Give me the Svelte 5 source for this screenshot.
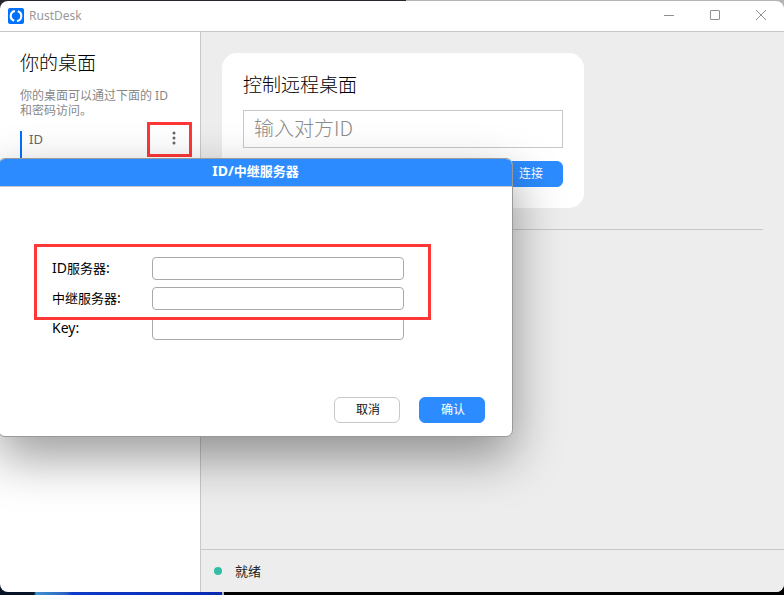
<script>
  const fields = [
    { id: 'id-server', latin: 'ID', label: '服务器', colon: ':' },
    { id: 'relay-server', latin: '', label: '中继服务器', colon: ':' },
    { id: 'key', latin: 'Key', label: '', colon: ':' }
  ];
  let values = $state({ 'id-server': '', 'relay-server': '', key: '' });
  let peer = $state('');
</script>

<div class="desktop">
  <div class="window">
    <header class="titlebar">
      <svg class="logo" viewBox="0 0 16 16" aria-hidden="true">
        <rect width="16" height="16" rx="2" fill="#0071ff" />
        <g fill="none" stroke="#fff" stroke-width="2.1">
          <path d="M7 3A5 5 0 0 0 6.2 12.7" />
          <path d="M9 13A5 5 0 0 0 9.8 3.3" />
        </g>
      </svg>
      <span class="app-name">RustDesk</span>
      <div class="controls">
        <button aria-label="最小化"><svg viewBox="0 0 12 12"><path d="M1 5.5h10" /></svg></button>
        <button aria-label="最大化"><svg viewBox="0 0 12 12"><rect x="1.5" y="0.5" width="9" height="9" rx="0.5" /></svg></button>
        <button aria-label="关闭"><svg viewBox="0 0 12 12"><path d="M1 0l10 10M11 0L1 10" /></svg></button>
      </div>
    </header>

    <div class="body">
      <aside>
        <h1>你的桌面</h1>
        <p>你的桌面可以通过下面的 ID 和密码访问。</p>
        <div class="id-row">
          <span>ID</span>
          <button class="more" aria-label="菜单">
            <svg viewBox="0 0 4 14"><circle cx="2" cy="2" r="1.5" /><circle cx="2" cy="7" r="1.5" /><circle cx="2" cy="12" r="1.5" /></svg>
          </button>
        </div>
      </aside>

      <main>
        <div class="content">
          <section class="card">
            <h2>控制远程桌面</h2>
            <input class="peer" aria-label="输入对方ID" placeholder="输入对方ID" bind:value={peer} />
            <div class="card-actions"><button class="btn primary">连接</button></div>
          </section>
          <hr />
        </div>
        <footer><i></i><span>就绪</span></footer>
      </main>
    </div>
  </div>

  <form class="dialog" aria-labelledby="dialog-title" onsubmit={(e) => e.preventDefault()}>
    <h3 id="dialog-title"><span class="latin">ID/</span>中继服务器</h3>
    <div class="fields">
      {#each fields as field}
        <div class="field">
          <label for={field.id}><span class="latin">{field.latin}</span>{field.label}<span class="latin">{field.colon}</span></label>
          <input id={field.id} bind:value={values[field.id]} />
        </div>
      {/each}
      <div class="mark servers"></div>
    </div>
    <div class="actions">
      <button type="button" class="btn">取消</button>
      <button class="btn primary">确认</button>
    </div>
  </form>
</div>

<style>
  .desktop, .desktop * { box-sizing: border-box; }
  .desktop {
    position: relative;
    height: 100vh;
    padding: 1px 0 3px;
    display: flex;
    overflow: hidden;
    background:
      linear-gradient(90deg, #26262e 406px, #b4b4b4 406px) top / 100% 12px no-repeat,
      linear-gradient(90deg, #071427 34px, #3f93cf 36px, #2d62c4 66px, #0f3bc8 72px, #0829b0 222px, #b5b5b5 222px, #b5b5b5 224px, #000 224px) bottom / 100% 12px no-repeat;
    font-family: "Noto Sans", "Noto Sans CJK SC", sans-serif;
    font-size: 13px;
    color: #222;
  }
  button, input { font-family: inherit; margin: 0; }
  button { padding: 0; border: 0; background: none; }
  h1, h2, h3, p { margin: 0; }
  .latin { font-size: 14px; line-height: 1; }
  .window {
    flex: 1;
    display: flex;
    flex-direction: column;
    border-radius: 8px;
    overflow: hidden;
    background: #fff;
  }
  .titlebar {
    flex: none;
    height: 31px;
    display: flex;
    align-items: center;
    padding-left: 8px;
    border-bottom: 1px solid #c8c8c8;
  }
  .logo { width: 16px; height: 16px; margin-right: 5px; }
  .app-name { font-size: 12px; line-height: 16px; color: #999; }
  .controls { margin-left: auto; display: flex; }
  .controls button { width: 46px; height: 30px; display: flex; align-items: center; justify-content: center; }
  .controls svg { width: 12px; height: 12px; fill: none; stroke: #909090; }
  .body { flex: 1; display: flex; min-height: 0; }
  aside {
    flex: none;
    width: 201px;
    padding: 17px 20px;
    border-right: 1px solid #c8c8c8;
  }
  h1, h2 { font-size: 19px; line-height: 28px; font-weight: 300; color: #000; }
  aside p { margin-top: 11px; padding-right: 4px; font-size: 12px; line-height: 15px; color: #888; }
  .id-row {
    margin-top: 13px;
    height: 46px;
    padding-left: 7px;
    border-left: 2px solid #0071ff;
    display: flex;
    justify-content: space-between;
    line-height: 16px;
    color: #666;
  }
  .more {
    width: 45px;
    height: 35px;
    margin: -9px -12px 0 0;
    padding-left: 8px;
    border: 3px solid #ff3737;
  }
  .more svg { display: block; width: 4px; height: 14px; margin: -3px auto 0; fill: #666; }
  main { flex: 1; min-width: 0; display: flex; flex-direction: column; background: #ededed; }
  .content { flex: 1; padding: 21px; }
  .card { max-width: 362px; padding: 18px 21px 21px; border-radius: 15px; background: #fff; }
  .peer {
    display: block;
    width: 100%;
    height: 38px;
    margin-top: 11px;
    padding: 0 10px 3px;
    border: 1px solid #c8c8c8;
    font-family: "Noto Sans CJK SC", sans-serif;
    font-size: 20px;
    font-weight: 300;
  }
  .peer::placeholder { color: #8c8c8c; opacity: 1; }
  .card-actions { margin-top: 13px; display: flex; justify-content: flex-end; }
  .btn {
    width: 66px;
    height: 26px;
    padding-left: 2px;
    border: 1px solid #c8c8c8;
    border-radius: 6px;
    font-size: 12px;
    line-height: 24px;
    color: #111;
    background: #fff;
  }
  .primary { border-color: #2c8cff; background: #2c8cff; color: #fff; }
  hr { margin: 21px 0 0; border: 0; border-top: 1px solid #c8c8c8; }
  footer {
    flex: none;
    height: 43px;
    padding-left: 13px;
    display: flex;
    align-items: center;
    gap: 13px;
    border-top: 1px solid #c8c8c8;
  }
  footer span { line-height: 18px; padding-bottom: 1px; }
  footer i { width: 8px; height: 8px; border-radius: 50%; background: #32bea6; }
  .dialog {
    position: absolute;
    top: 158px;
    left: -2px;
    width: 515px;
    border: 1px solid #999;
    border-radius: 7px;
    overflow: hidden;
    background: #fff;
    box-shadow: 0 20px 50px rgba(0, 0, 0, 0.4);
    color: #000;
  }
  h3 {
    height: 28px;
    border-bottom: 1px solid #c8c8c8;
    background: #2c8cff;
    color: #fff;
    font-size: 13px;
    line-height: 24px;
    text-align: center;
  }
  .fields {
    position: relative;
    margin-top: 70px;
    padding-left: 53px;
    display: flex;
    flex-direction: column;
    gap: 7px;
  }
  .field { display: flex; align-items: center; }
  .field label { width: 100px; line-height: 20px; padding-bottom: 2px; }
  .field input { width: 252px; height: 23px; padding: 0 6px; border: 1px solid #aaa; border-radius: 4px; background: #fff; }
  .mark { position: absolute; border: 3px solid #ff3737; pointer-events: none; }
  .servers { left: 35px; top: -13px; width: 397px; height: 76px; }
  .actions { margin-top: 57px; padding: 0 27px 13px; display: flex; justify-content: flex-end; gap: 19px; }
</style>
